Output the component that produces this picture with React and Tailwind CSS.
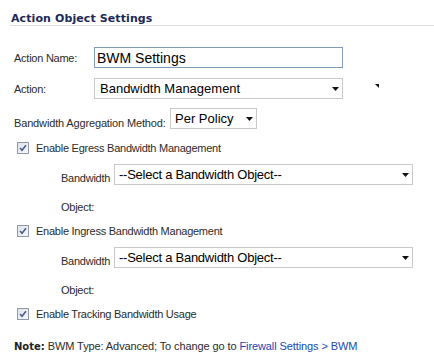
const Arrow = () => (
  <svg width="7" height="4" viewBox="0 0 7 4" className="shrink-0">
    <polygon points="0,0 7,0 3.5,4" fill="#111" />
  </svg>
);

const Select = ({ value, className = '' }) => (
  <div
    className={`flex items-center justify-between h-[21px] bg-white border border-[#c9c9c9] pl-[4px] pr-[3px] text-[13px] text-black ${className}`}
    style={{ fontFamily: '"Liberation Sans", Arial, sans-serif' }}
  >
    <span className="leading-none whitespace-nowrap">{value}</span>
    <Arrow />
  </div>
);

const Check = ({ label }) => (
  <div className="flex items-center h-[12px] pl-[7px]">
    <div className="w-[12px] h-[12px] border border-[#8f9aa6] bg-gradient-to-br from-[#dfe4ea] to-[#f7f8fa] flex items-center justify-center">
      <svg width="8" height="8" viewBox="0 0 8 8">
        <path d="M1 4 L3 6.3 L7 1.2" stroke="#4a5d8f" strokeWidth="1.6" fill="none" />
      </svg>
    </div>
    <span className="ml-[7px] whitespace-nowrap">{label}</span>
  </div>
);

const ObjectRow = () => (
  <>
    <div className="mt-[10px] flex items-end h-[21px] pl-[51px]">
      <span className="w-[53px] pb-[1px] whitespace-nowrap">Bandwidth</span>
      <Select value="--Select a Bandwidth Object--" className="w-[299px]" />
    </div>
    <div className="mt-[16px] h-[12px] leading-[12px] pl-[51px]">Object:</div>
  </>
);

export default function App() {
  return (
    <div
      className="w-[434px] h-[363px] bg-white text-[#2b2b2b] text-[11px] tracking-[-0.25px] leading-[12px] overflow-hidden"
      style={{ fontFamily: '"Liberation Sans", Arial, sans-serif' }}
    >
      <div className="ml-[10px] border-b border-[#dadde2] pt-[12px]">
        <h1
          className="pl-[1px] h-[13px] leading-[13px] text-[11px] font-bold text-[#1c2957] tracking-[0.1px]"
          style={{ fontFamily: '"DejaVu Sans", Verdana, sans-serif' }}
        >
          Action Object Settings
        </h1>
      </div>

      <div className="pl-[10px]">
        {/* Action Name */}
        <div className="mt-[21px] flex items-center h-[21px] pl-[4px]">
          <span className="w-[80px]">Action Name:</span>
          <div
            className="w-[249px] h-[21px] border border-[#7f9db9] bg-white flex items-center pl-[2px] text-[14px] text-black tracking-normal"
          >
            BWM Settings
          </div>
        </div>

        {/* Action */}
        <div className="mt-[10px] flex items-center h-[21px] pl-[4px]">
          <span className="w-[80px]">Action:</span>
          <Select value="Bandwidth Management" className="w-[249px] tracking-normal pl-[5px]" />
          <svg width="4" height="4" viewBox="0 0 4 4" className="ml-[32px] -mt-[6px]">
            <polygon points="0,0 4,0 4,4" fill="#111" />
          </svg>
        </div>

        {/* Aggregation */}
        <div className="mt-[10px] flex items-end h-[20px] pl-[4px]">
          <span className="w-[156px] whitespace-nowrap tracking-[-0.15px]">Bandwidth Aggregation Method:</span>
          <Select value="Per Policy" className="w-[87px] h-[20px] tracking-normal" />
        </div>

        <div className="mt-[13px]">
          <Check label="Enable Egress Bandwidth Management" />
        </div>
        <ObjectRow />

        <div className="mt-[12px]">
          <Check label="Enable Ingress Bandwidth Management" />
        </div>
        <ObjectRow />

        <div className="mt-[12px]">
          <Check label="Enable Tracking Bandwidth Usage" />
        </div>

        {/* Note */}
        <div className="mt-[20px] pl-[4px] whitespace-nowrap tracking-[-0.1px]">
          <span
            className="font-bold text-[10px] text-[#222] tracking-normal"
            style={{ fontFamily: '"DejaVu Sans", Verdana, sans-serif' }}
          >
            Note:
          </span>{' '}
          BWM Type: Advanced; To change go to{' '}
          <span className="text-[#2047b5]">Firewall Settings &gt; BWM</span>
        </div>
      </div>
    </div>
  );
}
